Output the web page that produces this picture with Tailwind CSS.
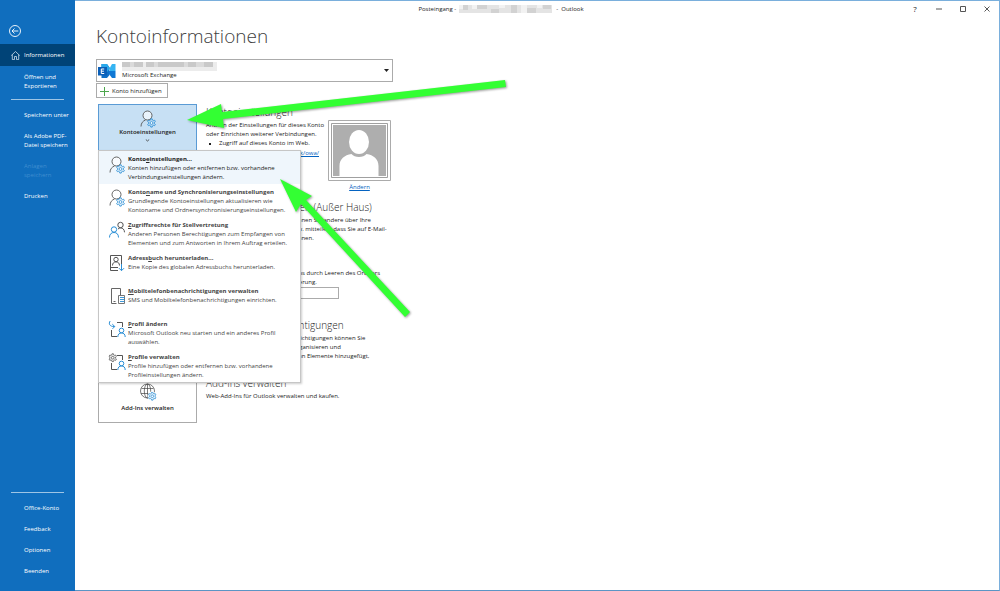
<!DOCTYPE html>
<html lang="de">
<head>
<meta charset="utf-8">
<title>Posteingang - Outlook</title>
<script src="https://cdn.jsdelivr.net/npm/@tailwindcss/browser@4"></script>
</head>
<body class="relative flex min-h-screen overflow-hidden bg-white font-['Open_Sans','Noto_Sans',sans-serif] text-[6px] leading-[9px] text-[#222]">

<svg class="hidden">
  <symbol id="gear" viewBox="0 0 10 10"><path d="M4.300.8h1.400l.3 1.200.9.5 1.200-.3.8 1.300-.9.8v1.300l.9.8-.8 1.300-1.200-.3-.9.5-.3 1.200H4.300l-.3-1.200-.9-.5-1.200.3-.8-1.300.9-.8V4.300l-.9-.8.8-1.300 1.200.3.900-.5z" fill="currentColor" fill-opacity=".12" stroke="currentColor" stroke-width=".8"/><circle cx="5" cy="5" r="1.400" fill="#fff" stroke="currentColor" stroke-width=".8"/></symbol>
  <symbol id="person-gear" viewBox="0 0 18 18"><g fill="none" stroke="#555" stroke-width=".9"><circle cx="8.500" cy="5.500" r="4.500" fill="#fff" fill-opacity=".6"/><path d="M2 16.500c0-3.500 2-5.500 4.500-6.500"/></g><svg x="7.500" y="8" width="10" height="10" color="#2b8fd6"><use href="#gear"/></svg></symbol>
  <symbol id="two-people" viewBox="0 0 18 18"><g fill="none" stroke-width="1"><g stroke="#555"><circle cx="12.500" cy="4" r="2.700"/><path d="M10 8c1.500-1.500 4-1.300 5.300 0 .8.900 1.200 2 1.200 3.300"/></g><g stroke="#2b8fd6"><circle cx="6" cy="8.500" r="2.700"/><path d="M1.500 16.500c0-3.500 2-5 4.500-5s4.500 1.500 4.500 5"/></g></g></symbol>
  <symbol id="address-book" viewBox="0 0 18 18"><g fill="none" stroke="#555" stroke-width="1"><path d="M10 16.500H2.500v-15h11v9M2.500 13.500H10"/><circle cx="8" cy="5.500" r="2.200"/><path d="M4.500 11.500c0-2.300 1.400-3.600 3.500-3.600s3.500 1.300 3.500 3.600"/></g><path d="M13.500 10v6.500M11 14.200l2.500 2.500 2.500-2.500" fill="none" stroke="#2b8fd6"/></symbol>
  <symbol id="phone-list" viewBox="0 0 18 18"><path d="M8.500 16.500h-5v-15h9v6.500M5.500 14.500h2" fill="none" stroke="#666"/><path d="M10.500 8.500h6v8h-6z" fill="#fff" stroke="#666" stroke-width=".9"/><path d="M12 10.500h4.500M12 12.500h4.500M12 14.500h4.500" stroke="#2b8fd6" stroke-width=".9"/></symbol>
  <symbol id="profile-base" viewBox="0 0 18 18"><path d="M9 2.500h5.500v4.500M3.500 10v6.500H9" fill="none" stroke="#555"/><g fill="none" stroke="#2b8fd6"><circle cx="13.500" cy="10.500" r="2.300"/><path d="M9.800 17c0-2.700 1.500-4 3.700-4s3.700 1.300 3.700 4"/></g></symbol>
  <symbol id="profile-switch" viewBox="0 0 18 18"><use href="#profile-base"/><path d="M2.200 1C.3 3.500 1.500 6.800 6.500 6.500M4.300 4.200l2.500 2.300-2.300 2.300" fill="none" stroke="#2b8fd6"/></symbol>
  <symbol id="profile-gear" viewBox="0 0 18 18"><use href="#profile-base"/><svg x="0" y="0" width="9.500" height="9.500" color="#555"><use href="#gear"/></svg></symbol>
  <symbol id="globe-gear" viewBox="0 0 18 18"><g fill="none" stroke="#444" stroke-width=".7"><circle cx="8.500" cy="8" r="7"/><ellipse cx="8.500" cy="8" rx="3.200" ry="7"/><path d="M8.500 1v14M2.500 5.500h12M2 10.500h13"/></g><circle cx="13" cy="13" r="4.500" fill="#fff"/><svg x="8.500" y="8.500" width="9.500" height="9.500" color="#2b8fd6"><use href="#gear"/></svg></symbol>
</svg>

<nav class="flex w-[75px] shrink-0 flex-col bg-[#106ebe] pb-[15px] font-medium text-white">
  <button class="mt-[25px] ml-[9px] size-3" aria-label="Zurück"><svg viewBox="0 0 12 12" class="size-3" fill="none" stroke="#fff" stroke-width=".9"><circle cx="6" cy="6" r="5.500"/><path d="M9.300 6H3M5.500 3.500 3 6l2.500 2.500"/></svg></button>
  <a href="#" class="mt-[7px] flex h-[22px] items-center gap-1 bg-[#004377] pl-[11px]"><svg viewBox="0 0 9 9" class="size-[9px] shrink-0" fill="none" stroke="#cfe0ee" stroke-width=".8"><path d="M.3 4.500 4.500.5l4.200 4M1.300 3.600v5h2.200V5.500h2v3.100h2.200v-5"/></svg>Informationen</a>
  <a href="#" class="mt-[7px] pl-6">Öffnen und<br>Exportieren</a>
  <hr class="mt-2 mr-[11px] ml-[11px] border-[#9fc5e5]">
  <a href="#" class="mt-[11px] pl-6 whitespace-nowrap">Speichern unter</a>
  <a href="#" class="mt-3 pl-6 whitespace-nowrap">Als Adobe PDF-<br>Datei speichern</a>
  <a href="#" class="mt-3 pl-6 text-[#3f8dcf]">Anlagen<br>speichern</a>
  <a href="#" class="mt-3 pl-6">Drucken</a>
  <div class="mt-auto flex flex-col gap-3">
    <hr class="mx-[11px] -mb-[1px] border-[#9fc5e5]">
    <a href="#" class="pl-6">Office-Konto</a>
    <a href="#" class="pl-6">Feedback</a>
    <a href="#" class="pl-6">Optionen</a>
    <a href="#" class="pl-6">Beenden</a>
  </div>
</nav>

<div class="flex min-w-0 flex-1 flex-col border-t border-r border-b border-[#7aafdc] border-b-[#5b95c5]">
  <header class="flex h-4 items-center">
    <div class="flex flex-1 items-center justify-center gap-[3px] pl-4">
      <span>Posteingang -</span>
      <svg class="h-2 w-[93px]" viewBox="0 0 93 8" preserveAspectRatio="none"><path fill="#e4e4e4" d="M0 0h93v8H0z"/><path fill="#d2d2d2" d="M4 0h5v5H4zM18 0h10v4H18zM32 4h8v4h-8zM52 0h6v8h-6zM67 3h10v5H67zM84 0h8v4h-8z"/><path fill="#f2f2f2" d="M0 0h4v4H0zM13 0h5v4h-5zM40 0h6v3h-6zM62 0h6v8h-6zM78 0h5v3h-5z"/></svg>
      <span class="pl-[1px]">-&nbsp; Outlook</span>
    </div>
    <div class="flex items-center gap-4 pr-2">
      <button class="size-2 text-[8px] leading-2" aria-label="Hilfe">?</button>
      <button aria-label="Minimieren"><svg class="size-2" viewBox="0 0 8 8"><path d="M1 4h6" stroke="#555"/></svg></button>
      <button aria-label="Maximieren"><svg class="size-2" viewBox="0 0 8 8"><path d="M1.500 1.500h5v5h-5z" fill="none" stroke="#555"/></svg></button>
      <button aria-label="Schließen"><svg class="size-2" viewBox="0 0 8 8"><path d="m1.500 1.500 5 5m0-5-5 5" stroke="#444" stroke-width=".9"/></svg></button>
    </div>
  </header>

  <main class="flex flex-col items-start pl-[21px]">
    <h1 class="mt-[5px] text-[19px] leading-7 font-light text-[#404040]">Kontoinformationen</h1>

    <button class="mt-[9px] flex h-[23px] w-[297px] items-center border border-[#ababab] px-[1px] text-left">
      <svg class="h-4 w-[18px] shrink-0" viewBox="0 0 18 16"><path fill="#0f6fc6" d="M3.500 1H9l2.500 3.500V12L9 15H3.500z"/><path fill="#28a8ea" d="M3.500 1H9l3 4.500L9 9H3.500z"/><path fill="#35b4f2" d="M12 4.500 14 1h3.500v7H12z"/><path fill="#0f78d4" d="M11 8h6.500v7H14l-3-4z"/><path fill="#0a5fb8" d="M0 4h9v8.500H0z"/><path d="M6.200 6H3.300v4.500h2.900M3.300 8.200h2.600" fill="none" stroke="#fff"/></svg>
      <span class="flex flex-1 flex-col pt-[1px] pl-[6px]">
        <svg class="h-[9px] w-[95px]" viewBox="0 0 95 9" preserveAspectRatio="none"><path fill="#ececec" d="M0 0h95v9H0z"/><path fill="#c9c9c9" d="M0 0h8v5H0zM12 0h9v5h-9zM24 0h8v5h-8zM36 0h26v5H36zM66 0h8v5h-8zM82 0h9v5h-9z"/><path fill="#dadada" d="M8 0h4v5H8zM32 0h4v5h-4zM62 0h4v5h-4zM74 0h8v5h-8z"/></svg>
        <span>Microsoft Exchange</span>
      </span>
      <svg class="mr-[2px] h-[3px] w-[5px]" viewBox="0 0 5 3"><path d="M0 0h5L2.500 3z" fill="#222"/></svg>
    </button>
    <button class="mt-[1px] flex h-[15px] w-[72px] items-center gap-[3px] border border-[#ababab] pt-[1px] pl-[3px]"><svg class="size-[9px]" viewBox="0 0 9 9"><path d="M4.500 0v9M0 4.500h9" stroke="#4ca64c"/></svg>Konto hinzufügen</button>

    <section class="relative mt-[6px] ml-[2px] flex h-24 gap-[9px]">
      <div class="w-[99px]">
        <button class="flex h-[47px] w-full flex-col items-center border border-[#5a9bd5] bg-[#c7e0f4] pt-[5px] font-semibold"><svg class="size-[18px]"><use href="#person-gear"/></svg>Kontoeinstellungen<svg class="mt-[2px] h-[3px] w-[5px]" viewBox="0 0 5 3"><path d="m.8.500 1.700 1.500L4.200.500" fill="none" stroke="#333" stroke-width=".8"/></svg></button>
      </div>
      <div class="w-[123px] pt-[1px] whitespace-nowrap">
        <h2 class="mb-[2px] text-[10px] leading-[14px] font-light">Kontoeinstellungen</h2>
        <p>Ändern der Einstellungen für dieses Konto<br>oder Einrichten weiterer Verbindungen.</p>
        <ul><li class="flex items-center gap-2 pl-[3px]"><span class="size-[2px] bg-[#222]"></span>Zugriff auf dieses Konto im Web.</li></ul>
        <a href="#" class="mt-[1px] block text-right text-[#0563c1] underline"><span class="pr-[10px]">https://outlook/owa/</span></a>
      </div>
      <div class="-ml-[10px] flex flex-col items-center pt-4">
        <svg class="h-[61px] w-[63px]" viewBox="0 0 63 61"><path fill="#fff" stroke="#ababab" d="M.5.500h62v60H.500z"/><path fill="#fff" stroke="#888" stroke-width=".8" d="M3.500 3.500h56v54h-56z"/><path fill="#aeaeae" d="M5 5h53v51H5z"/><g fill="#fff"><ellipse cx="31" cy="22" rx="10" ry="12"/><path d="M11.500 56V46c0-7 5-11 12-12 3 4 12 4 15 0 7 1 12 5 12 12v10z"/></g></svg>
        <a href="#" class="mt-[2px] text-[#0563c1] underline">Ändern</a>
      </div>

      <div role="menu" class="absolute top-[46px] left-0 z-10 w-[203px] border border-[#c6c6c6] bg-white whitespace-nowrap text-[#444] shadow-[1px_1px_2px_#0003] *:flex *:h-[33px] *:w-full *:items-start *:gap-[2px] *:pt-1 *:pl-[9px] *:text-left">
        <button role="menuitem" class="bg-[#eff6fc] text-[#222]"><svg class="mt-[1px] size-[18px]"><use href="#person-gear"/></svg><span><b>Konto<u>e</u>instellungen...</b><br>Konten hinzufügen oder entfernen bzw. vorhandene<br>Verbindungseinstellungen ändern.</span></button>
        <button role="menuitem"><svg class="mt-[1px] size-[18px]"><use href="#person-gear"/></svg><span><b>Konto<u>n</u>ame und Synchronisierungseinstellungen</b><br>Grundlegende Kontoeinstellungen aktualisieren wie<br>Kontoname und Ordnersynchronisierungseinstellungen.</span></button>
        <button role="menuitem"><svg class="size-[18px]"><use href="#two-people"/></svg><span><b><u>Z</u>ugriffsrechte für Stellvertretung</b><br>Anderen Personen Berechtigungen zum Empfangen von<br>Elementen und zum Antworten in Ihrem Auftrag erteilen.</span></button>
        <button role="menuitem"><svg class="size-[18px]"><use href="#address-book"/></svg><span><b>Adress<u>b</u>uch herunterladen...</b><br>Eine Kopie des globalen Adressbuchs herunterladen.</span></button>
        <button role="menuitem"><svg class="size-[18px]"><use href="#phone-list"/></svg><span><b><u>M</u>obiltelefonbenachrichtigungen verwalten</b><br>SMS und Mobiltelefonbenachrichtigungen einrichten.</span></button>
        <button role="menuitem"><svg class="size-[18px]"><use href="#profile-switch"/></svg><span><b><u>P</u>rofil ändern</b><br>Microsoft Outlook neu starten und ein anderes Profil<br>auswählen.</span></button>
        <button role="menuitem"><svg class="size-[18px]"><use href="#profile-gear"/></svg><span><b><u>P</u>rofile verwalten</b><br>Profile hinzufügen oder entfernen bzw. vorhandene<br>Profileinstellungen ändern.</span></button>
      </div>
    </section>

    <section class="pl-[168px] whitespace-nowrap">
      <h2 class="mb-[2px] text-[10px] leading-[14px] font-light">Antworten (Außer Haus)</h2>
      <p class="pl-[27px]">können Sie andere über Ihre<br>bzw. mitteilen, dass Sie auf E-Mail-<br>können.</p>
    </section>
    <section class="mt-[26px] pl-[182px] whitespace-nowrap">
      <p>Postfachs durch Leeren des Ordners<br>-Archivierung.</p>
      <input aria-label="Postfachgröße" class="ml-2 block h-3 w-[53px] border border-[#ababab]">
    </section>
    <section class="mt-[19px] pl-[158px] whitespace-nowrap">
      <h2 class="mb-[2px] text-[10px] leading-[14px] font-light">Benachrichtigungen</h2>
      <p class="pl-[23px]">Benachrichtigungen können Sie<br>Mails organisieren und<br>z. B. wenn Elemente hinzugefügt,</p>
    </section>
    <section class="mt-[15px] ml-[2px] flex gap-[9px]">
      <button class="flex h-[47px] w-[99px] flex-col items-center gap-[3px] border border-[#ababab] pt-[6px] font-semibold"><svg class="size-[18px] shrink-0"><use href="#globe-gear"/></svg>Add-Ins verwalten</button>
      <div>
        <h2 class="mb-[2px] text-[10px] leading-[14px] font-light">Add-Ins verwalten</h2>
        <p>Web-Add-Ins für Outlook verwalten und kaufen.</p>
      </div>
    </section>
  </main>
</div>

<svg class="pointer-events-none absolute top-0 left-0 z-20 h-[591px] w-[1000px] drop-shadow-[1px_1px_1px_#0006]" viewBox="0 0 1000 591" fill="#33ff33" aria-hidden="true"><path d="M187 120 221 104 222 112 505 80 506 87 223 119 224 128z"/><path d="M280 179 312 196 306 200 410 312 405 317 301 204 296 212z"/></svg>
</body>
</html>
